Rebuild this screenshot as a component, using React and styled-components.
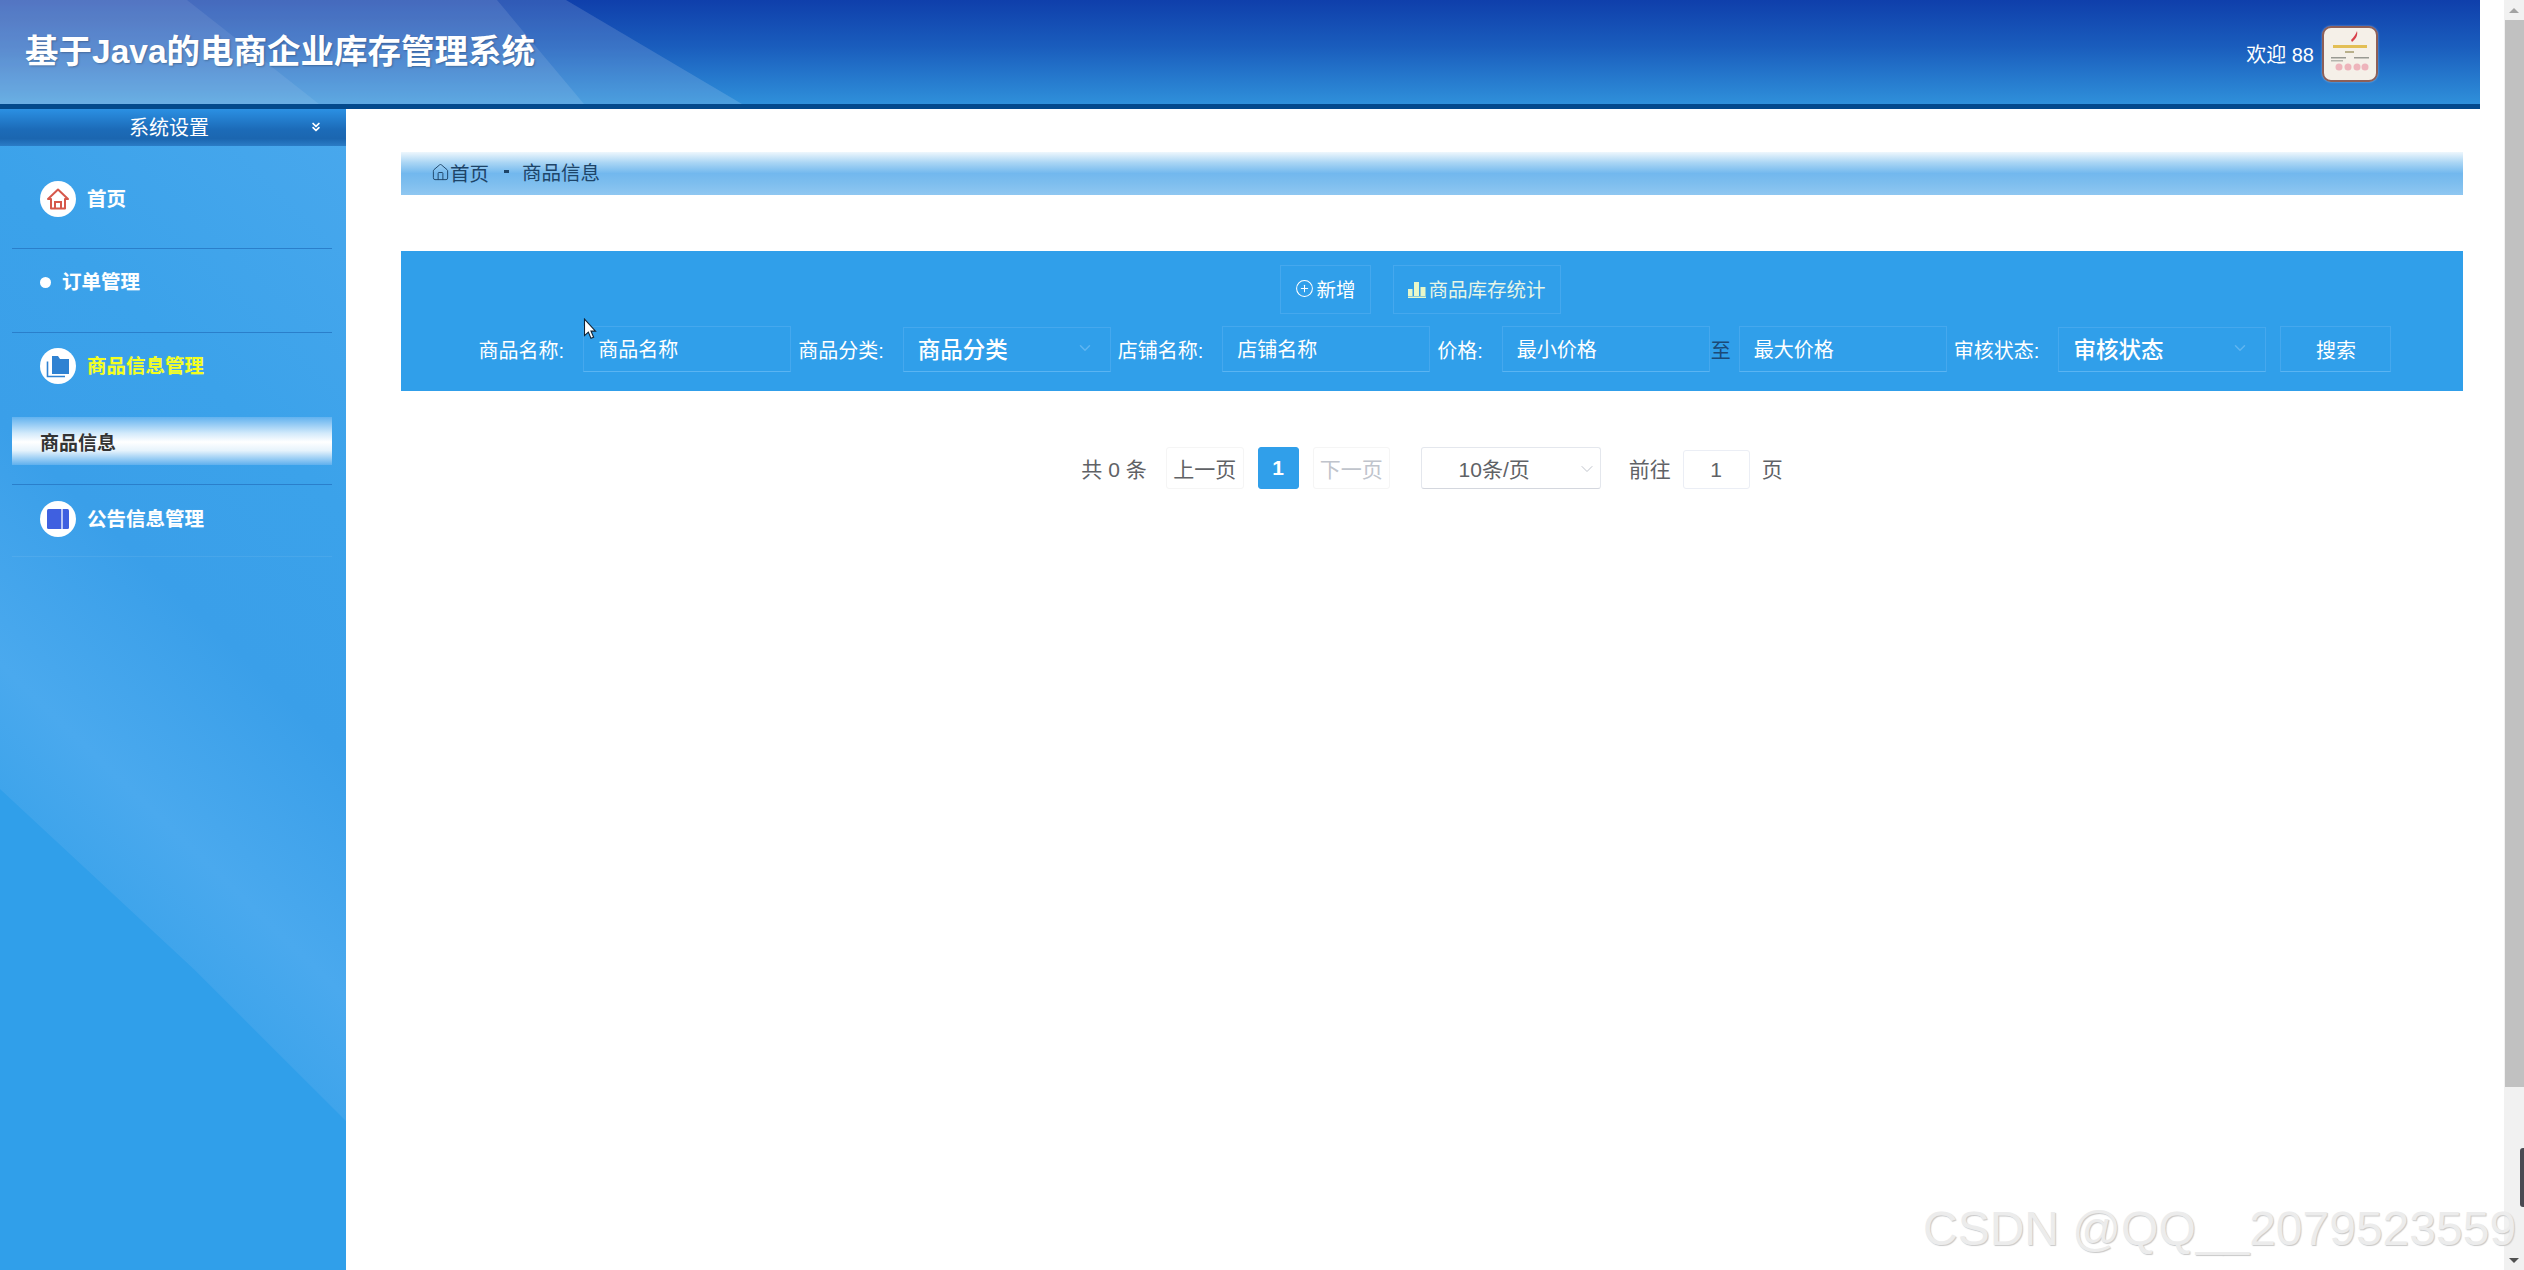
import styled, {createGlobalStyle} from 'styled-components';
import {ChevronDown, ChevronsDown, CirclePlus, Home} from 'lucide-react';

const GlobalStyle = createGlobalStyle`
    html,
    body {
        margin: 0;
        padding: 0;
        height: 100%;
        overflow: hidden;
        background: #fff;
    }

    * {
        box-sizing: border-box;
    }

    body {
        font-family: "Liberation Sans", "Noto Sans CJK SC", sans-serif;
        color: #606266;
    }
`;

const Page = styled.div`
    position: relative;
    display: flex;
    height: 100vh;
    overflow: hidden;
`;

const Main = styled.div`
    flex: 1;
    min-width: 0;
    display: flex;
    flex-direction: column;
`;

const Header = styled.header`
    position: relative;
    flex: none;
    height: 109px;
    margin-right: 24px;
    padding: 0 102px 4px 25px;
    display: flex;
    align-items: center;
    justify-content: space-between;
    background: linear-gradient(180deg, #0f3fab 0%, #1a5dbd 45%, #2f90da 100%);
    border-bottom: 5px solid #03498c;
`;

const HeaderArt = styled.svg`
    position: absolute;
    left: 0;
    top: 0;
`;

const Title = styled.h1`
    position: relative;
    margin: 0 0 4px;
    font-size: 33.5px;
    font-weight: 700;
    color: #fff;
    text-shadow: 1px 1px 2px rgba(0, 0, 0, 0.25);
`;

const UserBox = styled.div`
    position: relative;
    display: flex;
    align-items: center;
    gap: 8px;
    padding-top: 7px;
    font-size: 20px;
    color: #fff;
`;

const Avatar = styled.div`
    width: 56px;
    height: 56px;
    border: 2px solid #8d5f58;
    border-radius: 9px;
    background: #f5f0e8;
    overflow: hidden;
    box-shadow: 0 0 2px rgba(255, 255, 255, 0.5);

    svg {
        display: block;
    }
`;

const Body = styled.div`
    flex: 1;
    min-height: 0;
    display: flex;
`;

const Sidebar = styled.aside`
    position: relative;
    flex: none;
    width: 346px;
    background: #309fea;

    &::before {
        content: "";
        position: absolute;
        left: 0;
        top: 0;
        width: 100%;
        height: 1012px;
        clip-path: polygon(0 0, 100% 0, 100% 100%, 56% 860px, 0 680px);
        background: linear-gradient(44deg, #3ea4eb 24%, #4aa9ee 34%, #3a9fe9 52%, #3ba2ea 70%, #49a8ed 100%);
    }
`;

const SidebarInner = styled.div`
    position: relative;
`;

const SidebarTop = styled.div`
    height: 37px;
    display: flex;
    align-items: center;
    justify-content: center;
    position: relative;
    padding: 0 8px 3px 0;
    font-size: 20px;
    color: #fff;
    background: linear-gradient(180deg, #2b90e3 0%, #1c6bb8 55%, #1b66b0 80%, #2a7cc6 100%);

    svg {
        position: absolute;
        right: 23px;
        top: 11px;
    }
`;

const MenuList = styled.nav`
    padding: 0 14px 0 12px;
`;

const MenuGroup = styled.div`
    padding-top: ${(p) => p.$top}px;
    padding-bottom: ${(p) => p.$bottom}px;
    border-bottom: 1px solid ${(p) => (p.$faint ? 'rgba(255, 255, 255, 0.07)' : '#2a7fcb')};
`;

const MenuRow = styled.div`
    display: flex;
    align-items: center;
    padding-left: 28px;
    gap: 11px;
    line-height: 27px;
    font-size: 19.5px;
    font-weight: 700;
    color: ${(p) => (p.$active ? '#f4ff1e' : '#fff')};
    text-shadow: 0 0 1px rgba(255, 255, 255, 0.3);
`;

const MenuIcon = styled.span`
    flex: none;
    width: 36px;
    height: 36px;
    border-radius: 50%;
    background: #fff;
    display: flex;
    align-items: center;
    justify-content: center;
`;

const MenuDot = styled.span`
    flex: none;
    width: 11px;
    height: 11px;
    border-radius: 50%;
    background: #fff;
`;

const SubItem = styled.div`
    margin-top: 33px;
    height: 48px;
    padding-left: 28px;
    display: flex;
    align-items: center;
    font-size: 19px;
    font-weight: 700;
    color: #333;
    background: linear-gradient(180deg, #62b2ef 0%, #d3eafb 34%, #fff 52%, #e6f3fc 70%, #5fb0ee 100%);
`;

const Content = styled.main`
    flex: 1;
    min-width: 0;
    padding: 43px 41px 0 55px;
`;

const Crumbs = styled.div`
    height: 43px;
    padding: 0 0 5px 30px;
    display: flex;
    align-items: center;
    font-size: 19.5px;
    color: #1d4468;
    background: linear-gradient(180deg, #eef7fd 0%, #a9d5f4 25%, #72b8ee 50%, #7cbdee 70%, #8fc7f1 100%);
`;

const CrumbHome = styled.span`
    display: flex;
    align-items: center;
    margin-top: 3px;
`;

const CrumbDash = styled.span`
    width: 5px;
    height: 3px;
    margin: 0 13px 0 15px;
    background: #1d4468;
`;

const Toolbar = styled.section`
    margin-top: 56px;
    height: 140px;
    padding-top: 14px;
    background: #309fea;
`;

const ActionRow = styled.div`
    display: flex;
    justify-content: center;
    gap: 22px;
    padding-right: 23px;
`;

const ActionButton = styled.button`
    height: 49px;
    width: ${(p) => p.$width}px;
    padding: 0 0 2px;
    display: flex;
    align-items: center;
    justify-content: center;
    gap: 2px;
    background: transparent;
    border: 1px solid #45a8ee;
    font-family: inherit;
    font-size: 19.5px;
    color: ${(p) => (p.$pale ? '#e6f5e6' : '#fff')};
`;

const FilterRow = styled.div`
    margin-top: 12px;
    display: flex;
    justify-content: center;
    align-items: center;
    gap: 7px;
    padding-left: 6px;
`;

const Field = styled.div`
    display: flex;
    align-items: center;
`;

const FieldLabel = styled.label`
    padding-right: 19px;
    font-size: 20px;
    color: #fff;
    white-space: nowrap;
`;

const TextInput = styled.input`
    width: 208px;
    height: 46px;
    padding: 2px 14px 0;
    background: transparent;
    border: 1px solid #45a8ee;
    border-bottom-color: #5ab4f2;
    outline: none;
    font-family: inherit;
    font-size: 20px;
    color: #fff;

    &::placeholder {
        color: #fff;
        opacity: 1;
    }
`;

const RangeMark = styled.span`
    width: 29px;
    padding-left: 1px;
    font-size: 20px;
    color: #1b4a78;
`;

const SelectBox = styled.div`
    width: 208px;
    height: 45px;
    padding: 0 16px 2px 14px;
    display: flex;
    align-items: center;
    justify-content: space-between;
    border: 1px solid #45a8ee;
    border-bottom-color: #5ab4f2;
    font-size: 22.5px;
    font-weight: 500;
    color: #fff;

    svg {
        color: #5fb5f1;
    }
`;

const SearchButton = styled.button`
    width: 111px;
    height: 46px;
    margin-left: 7px;
    background: transparent;
    border: 1px solid #45a8ee;
    border-bottom-color: #5ab4f2;
    font-family: inherit;
    font-size: 20px;
    color: #fff;
`;

const Pager = styled.div`
    margin-top: 56px;
    display: flex;
    align-items: center;
    justify-content: center;
    font-size: 21px;
    color: #606266;
`;

const PagerTotal = styled.span`
    margin-right: 19px;
    white-space: pre;
`;

const PagerButton = styled.button`
    width: ${(p) => p.$width}px;
    height: 42px;
    margin-right: 14px;
    padding: 0;
    border-radius: 3px;
    border: 1px solid ${(p) => (p.$current ? '#309fea' : '#f5f5f5')};
    background: ${(p) => (p.$current ? '#309fea' : '#fff')};
    font-family: inherit;
    font-size: 21px;
    font-weight: ${(p) => (p.$current ? 700 : 400)};
    color: ${(p) => (p.$current ? '#fff' : p.$disabled ? '#c0c4cc' : '#606266')};
`;

const PagerSelect = styled.div`
    position: relative;
    width: 180px;
    height: 42px;
    margin: 0 28px 0 17px;
    padding-right: 33px;
    display: flex;
    align-items: center;
    justify-content: center;
    border: 1px solid #e4e7ed;
    border-bottom-color: #d4d7de;
    border-radius: 3px;

    svg {
        position: absolute;
        right: 3px;
        top: 11px;
        color: #c0c4cc;
    }
`;

const PagerInput = styled.input`
    width: 67px;
    height: 39px;
    margin: 3px 12px 0 12px;
    padding: 0;
    text-align: center;
    border: 1px solid #ebeef5;
    border-radius: 3px;
    outline: none;
    font-family: inherit;
    font-size: 21px;
    color: #606266;
`;

const ScrollTrack = styled.div`
    flex: none;
    width: 20px;
    position: relative;
    display: flex;
    flex-direction: column;
    background: #f1f1f1;
`;

const ScrollArrow = styled.div`
    flex: none;
    height: 20px;
    display: flex;
    align-items: center;
    justify-content: center;

    &::after {
        content: "";
        border-left: 5px solid transparent;
        border-right: 5px solid transparent;
        ${(p) => (p.$up ? 'border-bottom: 5px solid #a3a3a3;' : 'border-top: 5px solid #505050;')}
    }
`;

const ScrollThumb = styled.div`
    flex: none;
    height: 1067px;
    margin-left: 1px;
    background: #c1c1c1;
`;

const ScrollSpacer = styled.div`
    flex: 1;
`;

const ScrollMarker = styled.div`
    position: absolute;
    right: 0;
    top: 1148px;
    width: 4px;
    height: 59px;
    border-radius: 3px 0 0 3px;
    background: #4a4a52;
`;

const Watermark = styled.div`
    position: absolute;
    left: 1923px;
    top: 1201px;
    font-size: 48px;
    line-height: 56px;
    color: #ececec;
    text-shadow: 1px 1px 1px #c8c8c8;
    white-space: nowrap;
    pointer-events: none;
`;

const Cursor = styled.svg`
    position: absolute;
    left: 583px;
    top: 318px;
`;

const HouseIcon = () => (
    <svg width="24" height="24" viewBox="0 0 24 24" fill="none" stroke="#d6584b" strokeWidth="2">
        <path d="M2 12 12 2.500 22 12h-3v9.500H5V12z" strokeLinejoin="round"/>
        <path d="M9 21.500v-6.500h6v6.500"/>
    </svg>
);

const FolderIcon = () => (
    <svg width="24" height="24" viewBox="0 0 24 24">
        <path d="M6 2h6l2 3h9v15H6z" fill="#2f82d2"/>
        <path d="M1.500 7.500v15H19" fill="none" stroke="#2f82d2" strokeWidth="1.6"/>
    </svg>
);

const BookIcon = () => (
    <svg width="22" height="22" viewBox="0 0 22 22">
        <rect x="0" y="1" width="22" height="20" rx="1.5" fill="#3f60e0"/>
        <rect x="14" y="1" width="2" height="20" fill="#b9c6f6"/>
    </svg>
);

const BarsIcon = () => (
    <svg width="18" height="18" viewBox="0 0 18 18" fill="#e8f7c8">
        <rect x="0" y="9" width="4.5" height="7"/>
        <rect x="6" y="2" width="5" height="14"/>
        <rect x="12.500" y="7" width="5" height="9"/>
        <rect x="0" y="16.500" width="18" height="1.5"/>
    </svg>
);

const Certificate = () => (
    <svg width="52" height="52" viewBox="0 0 52 52">
        <path d="M27 12c3-3 5-6 6-9 1 4-1 8-5 11z" fill="#d8404a"/>
        <rect x="9" y="17" width="34" height="3" fill="#e3bf55"/>
        <rect x="21" y="23" width="9" height="2" fill="#b9b08a"/>
        <rect x="7" y="29" width="15" height="1.5" fill="#9a9a92"/>
        <rect x="30" y="29" width="15" height="1.5" fill="#9a9a92"/>
        <rect x="7" y="32" width="12" height="1.5" fill="#b5b5ad"/>
        <circle cx="15" cy="39" r="3.500" fill="#eeb4bb"/>
        <circle cx="24" cy="39" r="3.500" fill="#eeb4bb"/>
        <circle cx="33" cy="39" r="3.500" fill="#eeb4bb"/>
        <circle cx="41" cy="39" r="3.500" fill="#eeb4bb"/>
    </svg>
);

export default function App() {
    return (
        <Page>
            <GlobalStyle/>
            <Main>
                <Header>
                    <HeaderArt width="760" height="104">
                        <polygon points="0,0 566,0 742,104 0,104" fill="#fff" opacity="0.14"/>
                        <polygon points="0,0 497,0 584,104 0,104" fill="#fff" opacity="0.1"/>
                        <polygon points="0,0 187,0 319,104 0,104" fill="#fff" opacity="0.08"/>
                    </HeaderArt>
                    <Title>基于Java的电商企业库存管理系统</Title>
                    <UserBox>
                        <span>欢迎 88</span>
                        <Avatar><Certificate/></Avatar>
                    </UserBox>
                </Header>
                <Body>
                    <Sidebar>
                        <SidebarInner>
                            <SidebarTop>
                                系统设置
                                <ChevronsDown size={14} strokeWidth={3}/>
                            </SidebarTop>
                            <MenuList>
                                <MenuGroup $top={35} $bottom={31}>
                                    <MenuRow><MenuIcon><HouseIcon/></MenuIcon>首页</MenuRow>
                                </MenuGroup>
                                <MenuGroup $top={20} $bottom={36}>
                                    <MenuRow><MenuDot/>订单管理</MenuRow>
                                </MenuGroup>
                                <MenuGroup $top={15} $bottom={19}>
                                    <MenuRow $active><MenuIcon><FolderIcon/></MenuIcon>商品信息管理</MenuRow>
                                    <SubItem>商品信息</SubItem>
                                </MenuGroup>
                                <MenuGroup $top={16} $bottom={19} $faint>
                                    <MenuRow><MenuIcon><BookIcon/></MenuIcon>公告信息管理</MenuRow>
                                </MenuGroup>
                            </MenuList>
                        </SidebarInner>
                    </Sidebar>
                    <Content>
                        <Crumbs>
                            <CrumbHome>
                                <Home size={19} strokeWidth={1.2}/>
                                首页
                            </CrumbHome>
                            <CrumbDash/>
                            <span>商品信息</span>
                        </Crumbs>
                        <Toolbar>
                            <ActionRow>
                                <ActionButton $width={91}>
                                    <CirclePlus size={19} strokeWidth={1.3}/>
                                    新增
                                </ActionButton>
                                <ActionButton $width={168} $pale>
                                    <BarsIcon/>
                                    商品库存统计
                                </ActionButton>
                            </ActionRow>
                            <FilterRow>
                                <Field>
                                    <FieldLabel>商品名称:</FieldLabel>
                                    <TextInput placeholder="商品名称"/>
                                </Field>
                                <Field>
                                    <FieldLabel>商品分类:</FieldLabel>
                                    <SelectBox>商品分类<ChevronDown size={18}/></SelectBox>
                                </Field>
                                <Field>
                                    <FieldLabel>店铺名称:</FieldLabel>
                                    <TextInput placeholder="店铺名称"/>
                                </Field>
                                <Field>
                                    <FieldLabel>价格:</FieldLabel>
                                    <TextInput placeholder="最小价格"/>
                                    <RangeMark>至</RangeMark>
                                    <TextInput placeholder="最大价格"/>
                                </Field>
                                <Field>
                                    <FieldLabel>审核状态:</FieldLabel>
                                    <SelectBox>审核状态<ChevronDown size={18}/></SelectBox>
                                </Field>
                                <SearchButton>搜索</SearchButton>
                            </FilterRow>
                        </Toolbar>
                        <Pager>
                            <PagerTotal>共 0 条</PagerTotal>
                            <PagerButton $width={78}>上一页</PagerButton>
                            <PagerButton $width={41} $current>1</PagerButton>
                            <PagerButton $width={77} $disabled>下一页</PagerButton>
                            <PagerSelect>10条/页<ChevronDown size={20} strokeWidth={1.2}/></PagerSelect>
                            <span>前往</span>
                            <PagerInput defaultValue="1"/>
                            <span>页</span>
                        </Pager>
                    </Content>
                </Body>
            </Main>
            <ScrollTrack>
                <ScrollArrow $up/>
                <ScrollThumb/>
                <ScrollSpacer/>
                <ScrollArrow/>
                <ScrollMarker/>
            </ScrollTrack>
            <Watermark>CSDN @QQ__2079523559</Watermark>
            <Cursor width="14" height="22" viewBox="0 0 12 20">
                <path d="M1 1v15l3.500-3.200 2.400 5.700 2.400-1-2.400-5.600H11z" fill="#fff" stroke="#123" strokeWidth="1"/>
            </Cursor>
        </Page>
    );
}
